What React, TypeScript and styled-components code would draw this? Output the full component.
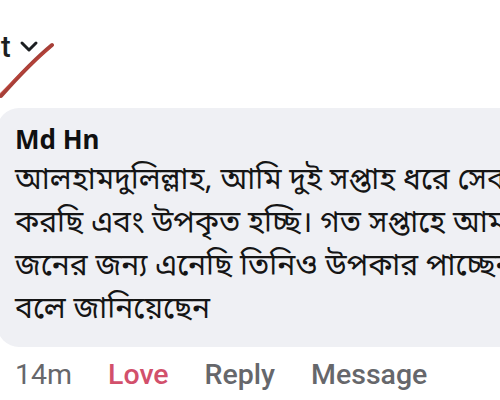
import React from "react";
import styled, { createGlobalStyle } from "styled-components";

const Global = createGlobalStyle`
  html, body { margin: 0; padding: 0; background: #ffffff; }
  body { width: 500px; height: 400px; overflow: hidden; }
`;

const Page = styled.div`
  position: relative;
  width: 500px;
  height: 400px;
  overflow: hidden;
  background: #ffffff;
  font-family: "Noto Sans", "Noto Sans Bengali", sans-serif;
`;

const SortRow = styled.div`
  display: flex;
  align-items: center;
  gap: 8px;
  height: 30px;
  margin-top: 32px;
  margin-left: -14px;
  font-family: Roboto, "Noto Sans", sans-serif;
  font-size: 29px;
  font-weight: 500;
  color: #1c1e21;
`;

const Marker = styled.svg`
  position: absolute;
  left: 0;
  top: 40px;
  width: 60px;
  height: 60px;
  pointer-events: none;
`;

const Bubble = styled.div`
  margin: 46px -40px 0 -3px;
  padding: 14px 0 15px 18px;
  background: #eff0f4;
  border-radius: 22px;
  display: flex;
  flex-direction: column;
`;

const Author = styled.div`
  font-family: "Noto Sans", sans-serif;
  font-weight: 700;
  font-size: 26px;
  line-height: 34px;
  color: #101010;
`;

const Body = styled.div`
  margin-top: 4px;
  font-family: "Noto Sans Bengali", "Noto Sans", sans-serif;
  font-size: 30px;
  line-height: 43px;
  color: #151515;
  white-space: pre-line;
`;

const Actions = styled.div`
  display: flex;
  align-items: center;
  gap: 36px;
  padding: 8px 0 0 15px;
  font-family: Roboto, "Noto Sans", sans-serif;
  font-size: 28.5px;
  line-height: 40px;
`;

const Action = styled.span<{ $tone?: "love" | "muted" }>`
  color: ${(p) => (p.$tone === "love" ? "#d2506b" : "#66676b")};
  font-weight: ${(p) => (p.$tone === "muted" ? 400 : 500)};
`;

export default function App() {
  return (
    <Page>
      <Global />
      <SortRow>
        <span>st</span>
        <svg width="20" height="14" viewBox="0 0 20 14">
          <path d="M3 3 L10 10 L17 3" fill="none" stroke="#1c1e21" strokeWidth="3" strokeLinecap="round" strokeLinejoin="round" />
        </svg>
      </SortRow>
      <Marker viewBox="0 0 60 60">
        <path d="M52 5 C40 15 24 30 1 56" fill="none" stroke="#9c2a22" strokeWidth="4" strokeLinecap="round" opacity="0.9" />
        <path d="M50 8 C38 18 22 32 0 54" fill="none" stroke="#c0453a" strokeWidth="1.5" strokeLinecap="round" opacity="0.7" />
      </Marker>
      <Bubble>
        <Author>Md Hn</Author>
        <Body>
          {"আলহামদুলিল্লাহ, আমি দুই সপ্তাহ ধরে সেবন\nকরছি এবং উপকৃত হচ্ছি। গত সপ্তাহে আমার\nজনের জন্য এনেছি তিনিও উপকার পাচ্ছেন\nবলে জানিয়েছেন"}
        </Body>
      </Bubble>
      <Actions>
        <Action $tone="muted">14m</Action>
        <Action $tone="love">Love</Action>
        <Action>Reply</Action>
        <Action>Message</Action>
      </Actions>
    </Page>
  );
}
